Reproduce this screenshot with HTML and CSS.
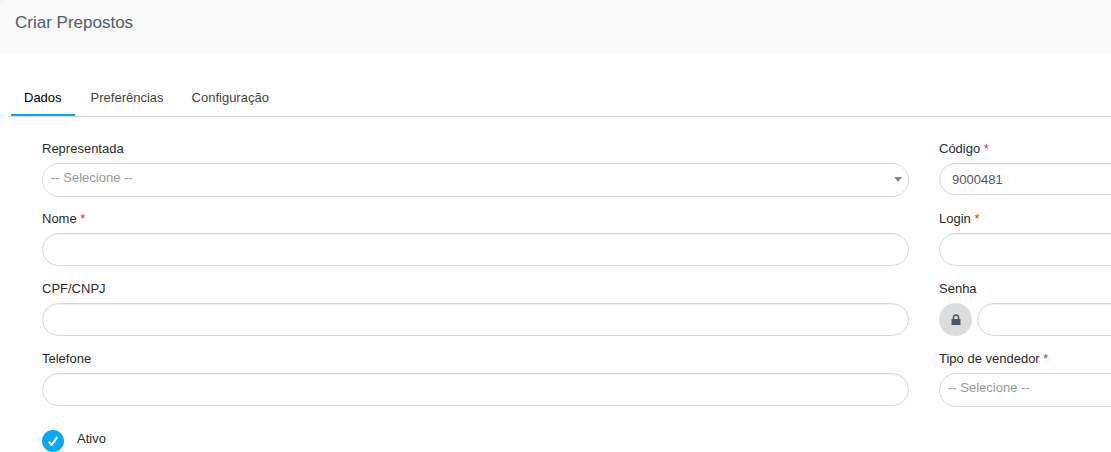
FILE: index.html
```html
<!DOCTYPE html>
<html lang="pt-br">
<head>
    <meta charset="UTF-8">
    <title>Criar Prepostos</title>
    <link rel="stylesheet" href="styles.css">
</head>
<body>
<div class="panel">
    <div class="panel-title">Criar Prepostos</div>

    <ul class="tabs">
        <li class="active">Dados</li>
        <li>Preferências</li>
        <li>Configuração</li>
    </ul>

    <form class="form">
        <div class="group">
            <label>Representada</label>
            <div class="select"><span>-- Selecione --</span><i class="caret"></i></div>
        </div>
        <div class="group">
            <label for="codigo">Código <b>*</b></label>
            <input type="text" id="codigo" class="short" value="9000481">
        </div>

        <div class="group">
            <label for="nome">Nome <b>*</b></label>
            <input type="text" id="nome">
        </div>
        <div class="group">
            <label for="login">Login <b>*</b></label>
            <input type="text" id="login">
        </div>

        <div class="group">
            <label for="cpf">CPF/CNPJ</label>
            <input type="text" id="cpf">
        </div>
        <div class="group">
            <label for="senha">Senha</label>
            <div class="senha">
                <button type="button" class="lock">
                    <svg width="10" height="12" viewBox="0 0 10 12">
                        <path d="M2.5 6V3.4a2.5 2.5 0 0 1 5 0V6" fill="none" stroke="#4b5864" stroke-width="1.5"/>
                        <rect x="0.5" y="5" width="9" height="6" rx="0.5" fill="#4b5864"/>
                    </svg>
                </button>
                <input type="password" id="senha">
            </div>
        </div>

        <div class="group">
            <label for="telefone">Telefone</label>
            <input type="text" id="telefone">
        </div>
        <div class="group">
            <label>Tipo de vendedor <b>*</b></label>
            <div class="select"><span>-- Selecione --</span><i class="caret"></i></div>
        </div>

        <div class="ativo">
            <span class="check">
                <svg width="22" height="22" viewBox="0 0 22 22">
                    <path d="M6.8 11.8l3 3.2L15.2 6.8" fill="none" stroke="#fff" stroke-width="2.2" stroke-linejoin="round"/>
                </svg>
            </span>
            <span>Ativo</span>
        </div>
    </form>
</div>
</body>
</html>
```
FILE: styles.css
```css
* {
    box-sizing: border-box;
}

body {
    margin: 0;
    overflow: hidden;
    background: #f1f1f1;
    color: #2b2b2b;
    font: 13px/18px "Liberation Sans", Arial, sans-serif;
}

.panel {
    height: 452px;
    overflow: hidden;
    background: #fff;
    border-top-left-radius: 5px;
}

.panel-title {
    height: 53px;
    padding: 12px 15px;
    background: #f9f9f9;
    color: #515d68;
    font-size: 17px;
    line-height: 22px;
}

/* abas */
.tabs {
    display: flex;
    height: 37px;
    margin: 27px 0 0 9px;
    padding: 0 0 0 2px;
    list-style: none;
    border-bottom: 1px solid #d8d9da;
}

.tabs li {
    height: 36px;
    margin-right: 2px;
    padding: 9px 13px 0;
    color: #444;
}

.tabs .active {
    margin-right: 3px;
    color: #000;
    border-bottom: 2px solid #00a8ff;
}

/* formulario */
.form {
    display: grid;
    grid-template-columns: 867px 867px;
    grid-auto-rows: 70px;
    column-gap: 30px;
    width: 1764px;
    margin: 23px 0 0 42px;
}

.group label {
    display: block;
    height: 23px;
}

.group b {
    color: #c9393d;
    font-weight: normal;
}

input {
    display: block;
    width: 100%;
    height: 33px;
    padding: 0 12px;
    background: #fff;
    border: 1px solid #d8d9da;
    border-radius: 17px;
    box-shadow: inset 0 1px 1px rgba(0, 0, 0, 0.06);
    color: #555;
    font: inherit;
}

.short {
    height: 32px;
}

.select {
    display: flex;
    justify-content: space-between;
    height: 34px;
    padding: 5px 6px 0 8px;
    border: 1px solid #d8d9da;
    border-radius: 17px;
    color: #999;
}

.caret {
    width: 0;
    height: 0;
    margin-top: 8px;
    border: 4px solid transparent;
    border-top: 5px solid #888;
    border-bottom: 0;
}

.senha {
    display: flex;
    gap: 5px;
}

.lock {
    display: flex;
    flex: none;
    align-items: center;
    justify-content: center;
    width: 33px;
    height: 33px;
    padding: 0;
    background: #dadcde;
    border: 0;
    border-radius: 50%;
}

.ativo {
    display: flex;
    gap: 13px;
    padding-top: 10px;
}

.check {
    width: 22px;
    height: 22px;
    background: #00a8ff;
    border-radius: 50%;
}
```
